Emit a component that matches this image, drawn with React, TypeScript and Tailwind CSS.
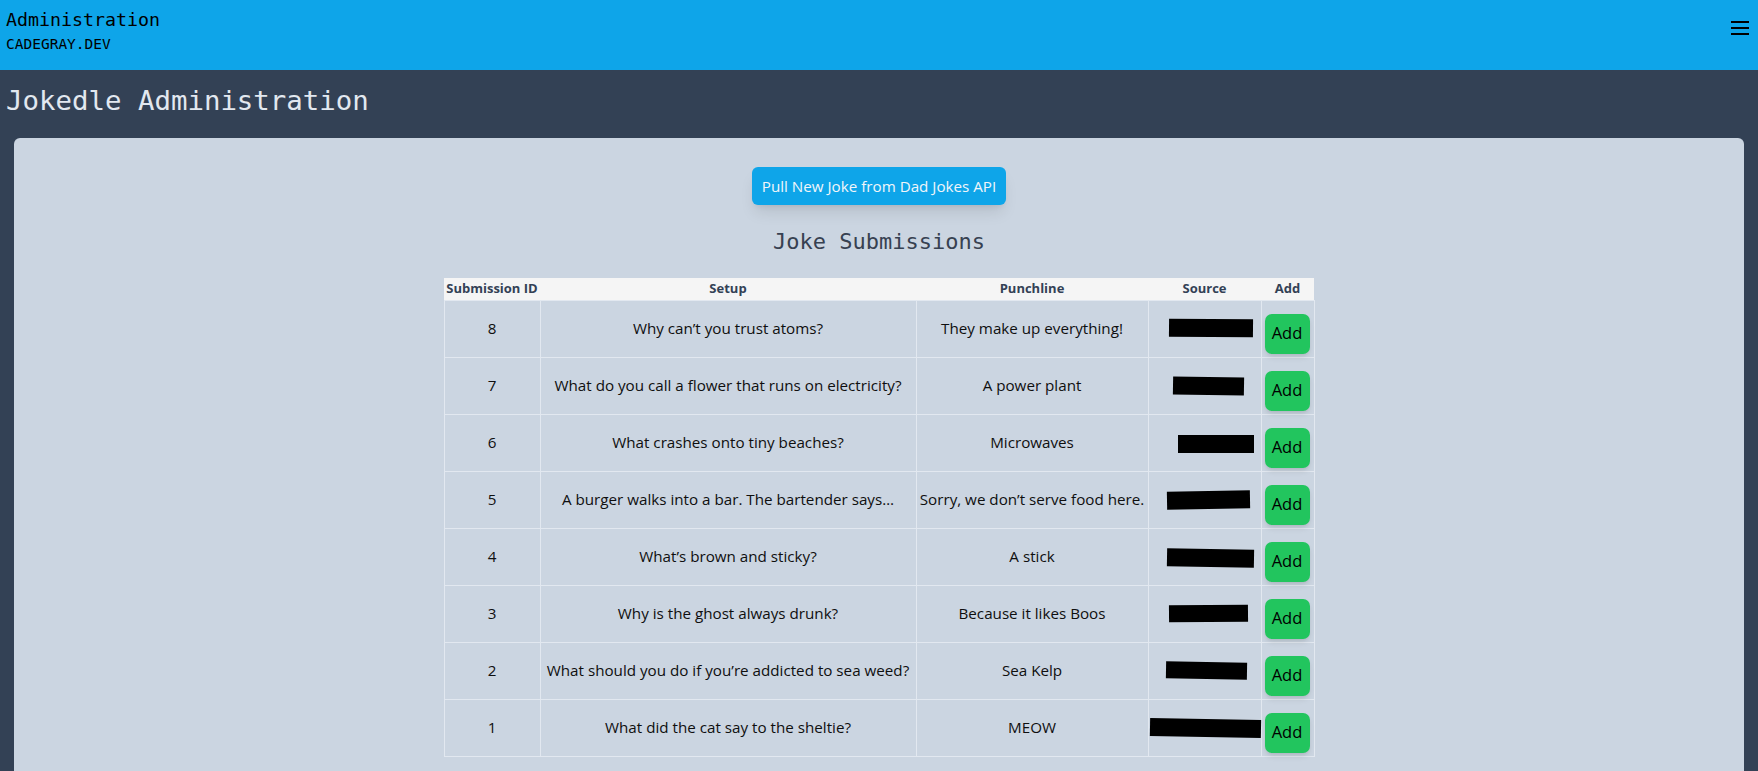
import React from "react";

const jokes = [
  { id: 8, setup: "Why can’t you trust atoms?", punchline: "They make up everything!", bar: { ml: 20, w: 84, h: 18, mt: -2, rot: "rotate-[0.5deg]" } },
  { id: 7, setup: "What do you call a flower that runs on electricity?", punchline: "A power plant", bar: { ml: 24, w: 71, h: 18, mt: 0, rot: "rotate-[1deg]" } },
  { id: 6, setup: "What crashes onto tiny beaches?", punchline: "Microwaves", bar: { ml: 29, w: 76, h: 18, mt: 2, rot: "rotate-[0deg]" } },
  { id: 5, setup: "A burger walks into a bar. The bartender says…", punchline: "Sorry, we don’t serve food here.", bar: { ml: 18, w: 83, h: 18, mt: 0, rot: "rotate-[-1deg]" } },
  { id: 4, setup: "What’s brown and sticky?", punchline: "A stick", bar: { ml: 18, w: 87, h: 18, mt: 2, rot: "rotate-[1deg]" } },
  { id: 3, setup: "Why is the ghost always drunk?", punchline: "Because it likes Boos", bar: { ml: 20, w: 79, h: 17, mt: 0, rot: "rotate-[-0.5deg]" } },
  { id: 2, setup: "What should you do if you’re addicted to sea weed?", punchline: "Sea Kelp", bar: { ml: 17, w: 81, h: 17, mt: 0, rot: "rotate-[1deg]" } },
  { id: 1, setup: "What did the cat say to the sheltie?", punchline: "MEOW", bar: { ml: 1, w: 111, h: 18, mt: 0, rot: "rotate-[1deg]" } },
];

const mono = "font-['DejaVu_Sans_Mono',monospace]";
const sans = "font-['Open_Sans',sans-serif]";

function NavBar() {
  return (
    <header className="h-[70px] bg-[#0ea5e9] flex items-start justify-between px-[6px] pt-[8px]">
      <div className={`${mono} text-black`}>
        <div className="text-[18.3px] leading-[24px]">Administration</div>
        <div className="text-[14.5px] leading-[20px] mt-[2px]">CADEGRAY.DEV</div>
      </div>
      <button className="mt-[13px] mr-[3px]">
        <svg width="18" height="14" viewBox="0 0 18 14">
          <rect x="0" y="0" width="18" height="2" fill="#000" />
          <rect x="0" y="6" width="18" height="2" fill="#000" />
          <rect x="0" y="12" width="18" height="2" fill="#000" />
        </svg>
      </button>
    </header>
  );
}

function SubmissionsTable() {
  return (
    <table className={`table-fixed border-collapse mx-auto ${sans}`}>
      <colgroup>
        <col className="w-[96px]" />
        <col className="w-[376px]" />
        <col className="w-[232px]" />
        <col className="w-[111px]" />
        <col className="w-[53px]" />
      </colgroup>
      <thead>
        <tr className="h-[22px] bg-[#f5f5f5] text-[#334155] text-[13px] font-bold">
          <th className="p-0 whitespace-nowrap">Submission ID</th>
          <th className="p-0">Setup</th>
          <th className="p-0">Punchline</th>
          <th className="p-0">Source</th>
          <th className="p-0">Add</th>
        </tr>
      </thead>
      <tbody className="text-[15.2px] text-[#0f0f0f]">
        {jokes.map((j) => (
          <tr key={j.id} className="h-[57px]">
            <td className="border border-[#e2e8f0] text-center p-0">{j.id}</td>
            <td className="border border-[#e2e8f0] text-center p-0 whitespace-nowrap">{j.setup}</td>
            <td className="border border-[#e2e8f0] text-center p-0 whitespace-nowrap">{j.punchline}</td>
            <td className="border border-[#e2e8f0] p-0">
              <div
                className={`bg-black ${j.bar.rot}`}
                style={{ marginLeft: j.bar.ml, width: j.bar.w, height: j.bar.h, marginTop: j.bar.mt }}
              />
            </td>
            <td className="border border-[#e2e8f0] p-0 align-top">
              <button className="mt-[13px] ml-[3px] w-[45px] h-[40px] rounded-[7px] bg-[#22c55e] text-black text-[16.5px] shadow-md">
                Add
              </button>
            </td>
          </tr>
        ))}
      </tbody>
    </table>
  );
}

export default function App() {
  return (
    <div className="min-h-screen bg-[#334155]">
      <NavBar />
      <h1 className={`${mono} text-[#e2e8f0] text-[27.4px] leading-[40px] px-[6px] pt-[11px] pb-[17px]`}>
        Jokedle Administration
      </h1>
      <main className="mx-[14px] bg-[#cbd5e1] rounded-md pt-[29px] pb-[20px]">
        <div className="flex justify-center">
          <button className={`${sans} h-[38px] px-[10px] rounded-md bg-[#0ea5e9] text-[#f1f5f9] text-[15.2px] shadow-lg`}>
            Pull New Joke from Dad Jokes API
          </button>
        </div>
        <h2 className={`${mono} text-center text-[#374151] text-[22px] leading-[30px] mt-[22px] mb-[21px]`}>
          Joke Submissions
        </h2>
        <SubmissionsTable />
      </main>
    </div>
  );
}
